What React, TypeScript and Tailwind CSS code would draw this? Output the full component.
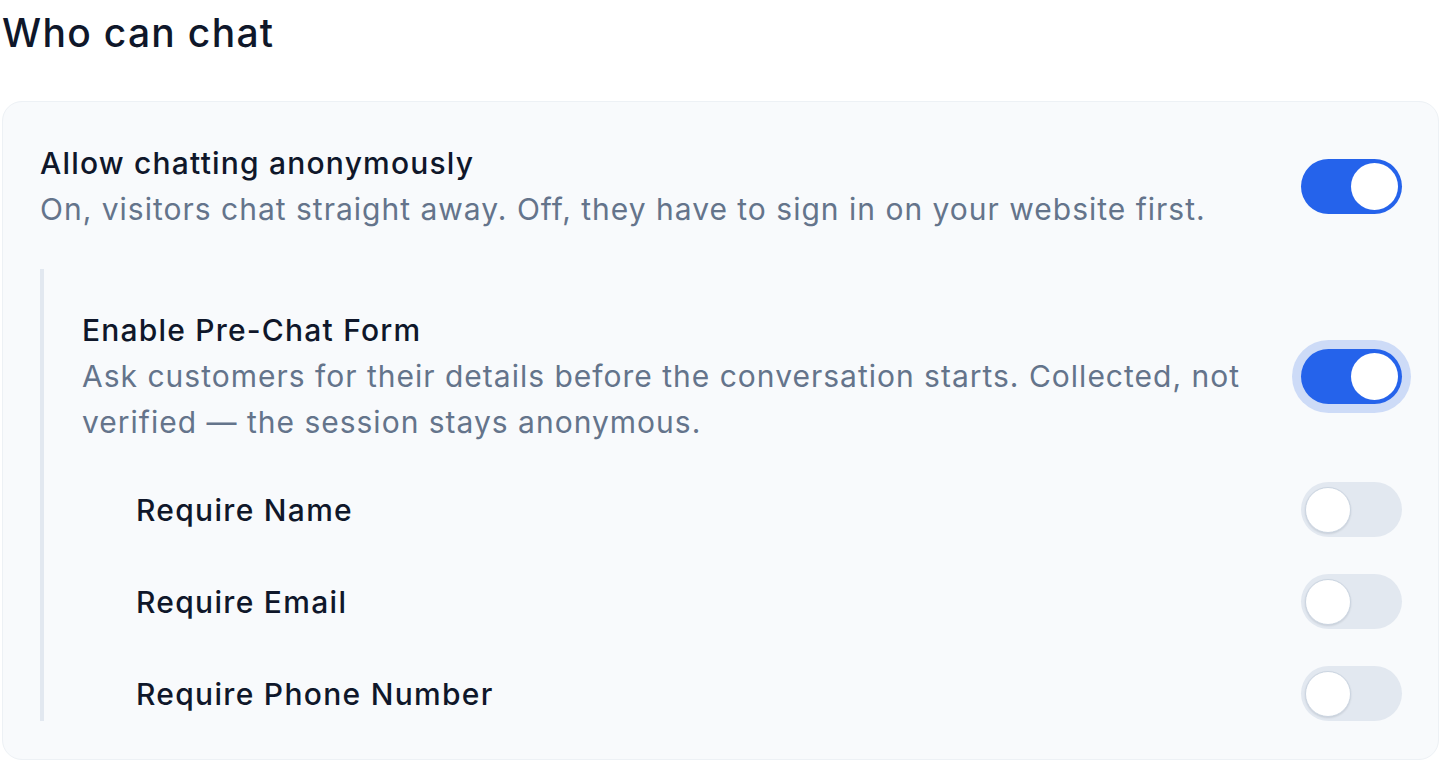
import React from "react";

function Toggle({ on, focus }: { on: boolean; focus?: boolean }) {
  if (on) {
    return (
      <div
        className={
          "relative flex h-[55px] w-[101px] shrink-0 items-center justify-end rounded-full bg-[#2563eb] pr-[4px] " +
          (focus ? "ring-[9px] ring-[#cddbf7]" : "")
        }
      >
        <div className="h-[47px] w-[47px] rounded-full bg-white" />
      </div>
    );
  }
  return (
    <div className="relative flex h-[55px] w-[101px] shrink-0 items-center justify-start rounded-full bg-[#e2e8f0] pl-[4px]">
      <div className="h-[46px] w-[46px] rounded-full border-[1.5px] border-[#cbd5e1] bg-white shadow-[0_1px_2px_rgba(15,23,42,0.12)]" />
    </div>
  );
}

export default function App() {
  return (
    <div
      className="min-h-[762px] w-full bg-white pl-[2px] pr-[1px] pt-[6px] text-[#0f172a]"
      style={{ fontFamily: "Inter, 'Noto Sans', sans-serif" }}
    >
      <h2 className="text-[39px] font-medium leading-[54px] tracking-[1.3px] text-[#0f172a]">
        Who can chat
      </h2>
      <div className="mt-[41px] rounded-[20px] border border-[#edf1f5] bg-[#f8fafc] pl-[37px] pr-[36px] py-[38px]">
        <div className="flex items-center justify-between gap-10">
          <div>
            <div className="text-[30px] font-medium leading-[46px] tracking-[1.2px] text-[#0f172a]">
              Allow chatting anonymously
            </div>
            <div className="text-[30px] leading-[46px] tracking-[1px] text-[#64748b]">
              On, visitors chat straight away. Off, they have to sign in on your website first.
            </div>
          </div>
          <Toggle on />
        </div>

        <div className="mt-[37px] flex flex-col gap-[37px] border-l-[4px] border-[#e2e8f0] pl-[38px] pt-[38px]">
          <div className="flex items-center justify-between gap-[44px]">
            <div>
              <div className="text-[30px] font-medium leading-[46px] tracking-[1.2px] text-[#0f172a]">
                Enable Pre-Chat Form
              </div>
              <div className="text-[30px] leading-[46px] tracking-[1px] text-[#64748b]">
                Ask customers for their details before the conversation starts. Collected, not verified — the session stays anonymous.
              </div>
            </div>
            <Toggle on focus />
          </div>

          {["Require Name", "Require Email", "Require Phone Number"].map((label) => (
            <div key={label} className="flex items-center justify-between pl-[54px]">
              <div className="text-[30px] font-medium leading-[46px] tracking-[1.3px] text-[#0f172a]">{label}</div>
              <Toggle on={false} />
            </div>
          ))}
        </div>
      </div>
    </div>
  );
}
